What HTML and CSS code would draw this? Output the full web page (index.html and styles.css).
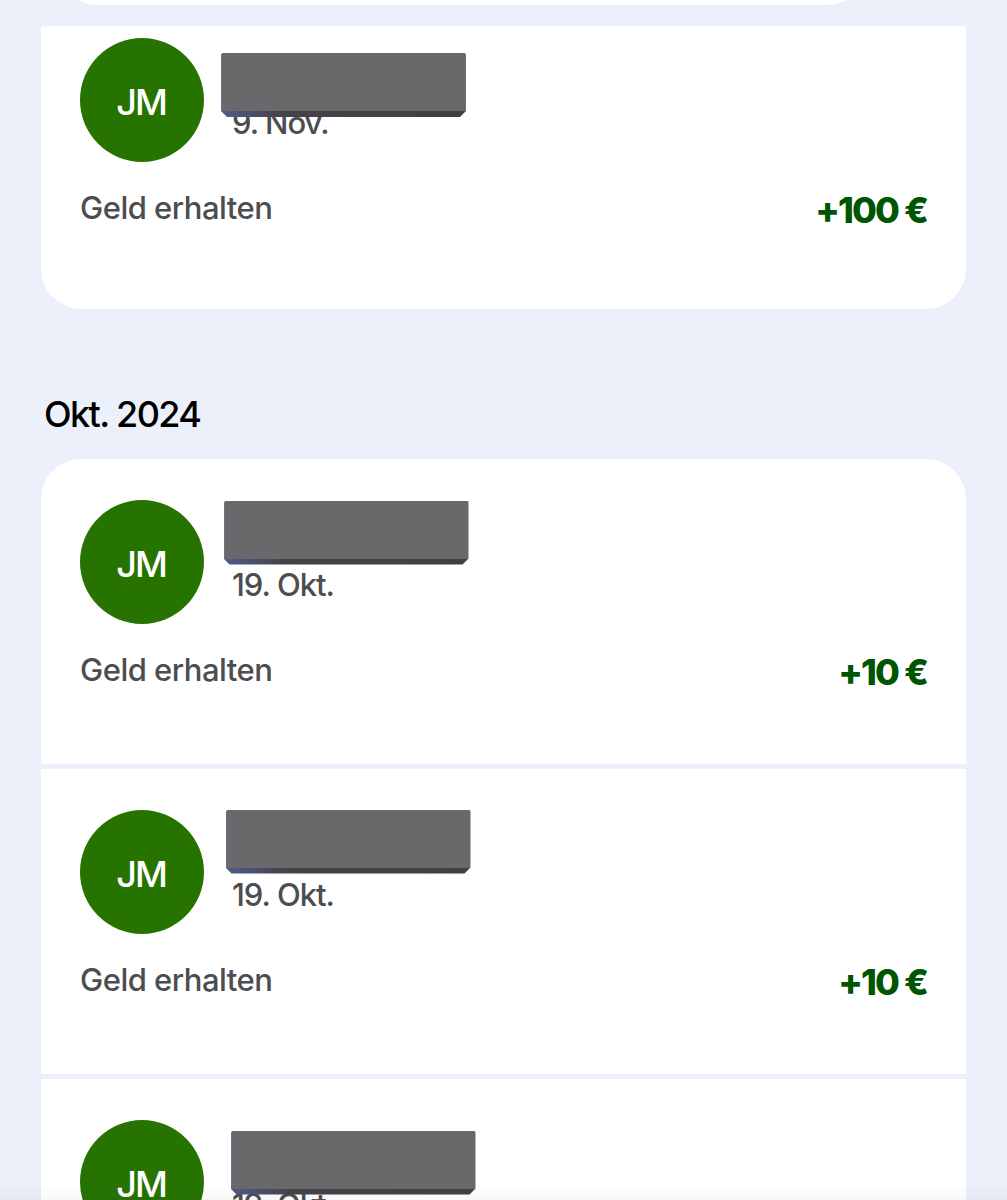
FILE: index.html
```
<!DOCTYPE html>
<html lang="de">
<head>
    <meta charset="UTF-8">
    <meta name="viewport" content="width=device-width, initial-scale=1.0">
    <title>Aktivitäten</title>
    <link rel="stylesheet" href="styles.css">
</head>
<body>

    <main class="activity">
        <!-- Search bar -->
        <div class="top-bar"></div>

        <!-- November -->
        <section class="card card-scrolled">
            <article class="transaction">
                <div class="person">
                    <div class="avatar"><span>JM</span></div>
                    <div class="date">9. Nov.</div>
                    <div class="name-cover cover-1"></div>
                </div>
                <div class="details">
                    <span class="type">Geld erhalten</span>
                    <span class="amount">+100 €</span>
                </div>
            </article>
        </section>

        <!-- October -->
        <h2 class="month">Okt. 2024</h2>
        <section class="card">
            <article class="transaction">
                <div class="person">
                    <div class="avatar"><span>JM</span></div>
                    <div class="date">19. Okt.</div>
                    <div class="name-cover cover-2"></div>
                </div>
                <div class="details">
                    <span class="type">Geld erhalten</span>
                    <span class="amount">+10 €</span>
                </div>
            </article>
            <article class="transaction">
                <div class="person">
                    <div class="avatar"><span>JM</span></div>
                    <div class="date">19. Okt.</div>
                    <div class="name-cover cover-3"></div>
                </div>
                <div class="details">
                    <span class="type">Geld erhalten</span>
                    <span class="amount">+10 €</span>
                </div>
            </article>
            <article class="transaction">
                <div class="person">
                    <div class="avatar"><span>JM</span></div>
                    <div class="date">19. Okt.</div>
                    <div class="name-cover cover-4"></div>
                </div>
            </article>
        </section>
    </main>

    <div class="bottom-fade"></div>

</body>
</html>
```
FILE: styles.css
```
* {
    margin: 0;
    padding: 0;
    box-sizing: border-box;
}

body {
    background: #ebf0fa;
    font-family: 'Inter', 'Liberation Sans', sans-serif;
    color: #000;
    height: 1200px;
    overflow: hidden;
}

.activity {
    height: 1200px;
    padding: 0 41px;
    overflow: hidden;
}

.top-bar {
    width: 810px;
    height: 5px;
    margin-left: 16px;
    background: #fff;
    /* only the lower edge of the pill is on screen */
    clip-path: inset(-80px 0 0 0 round 40px);
}

/* Cards */
.card {
    display: flex;
    flex-direction: column;
    gap: 5px;
    border-radius: 40px 40px 0 0;
    overflow: hidden;
}

.card-scrolled {
    margin-top: 21px;
    border-radius: 3px 3px 40px 40px;
}

.month {
    height: 150px;
    padding: 83px 0 0 3px;
    font-size: 36px;
    font-weight: 450;
    line-height: 44px;
    letter-spacing: -1.6px;
}

/* Transactions */
.transaction {
    height: 305px;
    padding: 41px 39px 0;
    background: #fff;
}

.card-scrolled .transaction {
    height: 283px;
    padding-top: 12px;
}

.person {
    display: flex;
    position: relative;
    gap: 28px;
    height: 124px;
}

.avatar {
    display: flex;
    align-items: center;
    justify-content: center;
    width: 124px;
    height: 124px;
    padding: 3px 2px 0 0;
    border-radius: 50%;
    background: #267300;
    color: #fff;
    font-size: 36px;
    font-weight: 450;
    letter-spacing: -2px;
}

.date {
    padding-top: 65px;
    color: #4b4d50;
    font-size: 31px;
    font-weight: 450;
    line-height: 40px;
    letter-spacing: -1px;
}

/* Block that covers the name */
.name-cover {
    position: absolute;
    width: 245px;
    height: 64px;
    border-radius: 2px;
    background:
        linear-gradient(90deg, #4f5c8c 0, #454348 60px, #413f42 100%) 0 100% / 100% 6px no-repeat,
        linear-gradient(90deg, #6979a3 0, #69696b 1px, #69696b 244px, #7c7c80 100%);
    clip-path: polygon(0 0, 100% 0, 100% 58px, 239px 100%, 6px 100%, 0 58px);
}

.cover-1 {
    left: 141px;
    top: 15px;
}

.cover-2 {
    left: 143.5px;
    top: 0.5px;
}

.cover-3 {
    left: 145.5px;
    top: -0.5px;
}

.cover-4 {
    left: 150.5px;
    top: 10.5px;
}

.details {
    display: flex;
    justify-content: space-between;
    padding-top: 26px;
}

.type {
    color: #4b4d50;
    font-size: 31px;
    font-weight: 450;
    line-height: 40px;
    letter-spacing: -0.5px;
}

.amount {
    color: #005500;
    font-size: 36px;
    font-weight: 800;
    line-height: 44px;
    letter-spacing: -1.9px;
}

/* Soft shade above the lower screen edge */
.bottom-fade {
    position: fixed;
    right: 0;
    bottom: 0;
    left: 0;
    height: 16px;
    background: linear-gradient(rgba(20, 30, 60, 0), rgba(20, 30, 60, 0.03));
}
```
